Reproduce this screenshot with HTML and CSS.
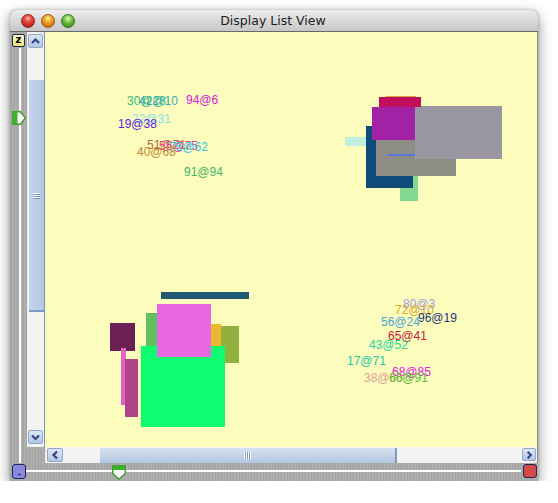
FILE: index.html
```html
<!DOCTYPE html>
<html>
<head>
<meta charset="utf-8">
<title>Display List View</title>
<link rel="stylesheet" href="styles.css">
</head>
<body>
<div class="window">
  <div class="titlebar">
    <div class="lights">
      <span class="light red"></span>
      <span class="light yellow"></span>
      <span class="light green"></span>
    </div>
    <div class="title">Display List View</div>
  </div>
  <div class="frame">
    <div class="leftpanel">
      <div class="zbtn">z</div>
      <div class="vtrack"></div>
      <svg class="marker-right" width="14" height="14" viewBox="0 0 14 14"><path d="M0.75 0.75H8.5L13.25 7L8.5 13.25H0.75Z" fill="#fff" stroke="#3c9e2c" stroke-width="1.5"/><rect x="0.5" y="0.5" width="5" height="13" fill="#3cb030"/></svg>
    </div>
    <div class="vscroll">
      <div class="abtn up"><svg width="13" height="12" viewBox="0 0 13 12"><path d="M3 8L6.5 4.5L10 8" fill="none" stroke="#34458a" stroke-width="2.2"/></svg></div>
      <div class="vthumb"><div class="vgrip"></div></div>
      <div class="spacer"></div>
      <div class="abtn down"><svg width="13" height="12" viewBox="0 0 13 12"><path d="M3 4.5L6.5 8L10 4.5" fill="none" stroke="#34458a" stroke-width="2.2"/></svg></div>
    </div>
    <div class="canvas">
      <div class="shape" style="left:300px;top:105px;width:21px;height:9px;background:#c2f0e0"></div>
      <div class="shape" style="left:355px;top:143px;width:18px;height:26px;background:#84d890"></div>
      <div class="shape" style="left:321px;top:94px;width:47px;height:62px;background:#0e4a7a"></div>
      <div class="shape" style="left:331px;top:108px;width:80px;height:36px;background:#8e8e86"></div>
      <div class="shape" style="left:327px;top:75px;width:43px;height:33px;background:#a222a6"></div>
      <div class="shape" style="left:370px;top:74px;width:87px;height:53px;background:#9a96a2"></div>
      <div class="shape" style="left:342px;top:122px;width:28px;height:2px;background:#5a78d8"></div>
      <div class="shape" style="left:334px;top:65px;width:42px;height:10px;background:#c0105c"></div>
      <div class="shape" style="left:341px;top:64px;width:30px;height:1px;background:#e0a040"></div>

      <div class="shape" style="left:116px;top:260px;width:88px;height:7px;background:#1f5a72"></div>
      <div class="shape" style="left:65px;top:291px;width:25px;height:28px;background:#6a2052"></div>
      <div class="shape" style="left:76px;top:316px;width:5px;height:57px;background:#e262c8"></div>
      <div class="shape" style="left:80px;top:327px;width:13px;height:58px;background:#b04488"></div>
      <div class="shape" style="left:101px;top:281px;width:11px;height:37px;background:#62c062"></div>
      <div class="shape" style="left:166px;top:292px;width:10px;height:22px;background:#e8b830"></div>
      <div class="shape" style="left:176px;top:294px;width:18px;height:37px;background:#90b040"></div>
      <div class="shape" style="left:96px;top:314px;width:84px;height:81px;background:#10fc70"></div>
      <div class="shape" style="left:112px;top:272px;width:54px;height:53px;background:#e868e2"></div>

      <span class="lbl" style="left:82px;top:63px;color:#30c080">30@28</span>
      <span class="lbl" style="left:94px;top:63px;color:#3aa8b8">42@10</span>
      <span class="lbl" style="left:141px;top:62px;color:#d020d4">94@6</span>
      <span class="lbl" style="left:87px;top:81px;color:#86e2e2">22@31</span>
      <span class="lbl" style="left:73px;top:86px;color:#6020e0">19@38</span>
      <span class="lbl" style="left:102px;top:107px;color:#b06838">51@71</span>
      <span class="lbl" style="left:114px;top:108px;color:#f040a0">55@75</span>
      <span class="lbl" style="left:124px;top:109px;color:#30c8e0">75@62</span>
      <span class="lbl" style="left:92px;top:114px;color:#c08838">40@68</span>
      <span class="lbl" style="left:139px;top:134px;color:#40b868">91@94</span>

      <span class="lbl" style="left:358px;top:266px;color:#a0a0e8">80@3</span>
      <span class="lbl" style="left:350px;top:272px;color:#e0a828">72@10</span>
      <span class="lbl" style="left:373px;top:280px;color:#203878">96@19</span>
      <span class="lbl" style="left:336px;top:284px;color:#48a8d8">56@24</span>
      <span class="lbl" style="left:343px;top:298px;color:#c82040">65@41</span>
      <span class="lbl" style="left:324px;top:307px;color:#20d8a0">43@52</span>
      <span class="lbl" style="left:302px;top:323px;color:#20c8a8">17@71</span>
      <span class="lbl" style="left:347px;top:334px;color:#e020e0">68@85</span>
      <span class="lbl" style="left:319px;top:340px;color:#e0a090">38@60</span>
      <span class="lbl" style="left:344px;top:340px;color:#50c030">66@91</span>
    </div>
    <div class="corner"></div>
    <div class="hscroll">
      <div class="abtn left"><svg width="13" height="12" viewBox="0 0 13 12"><path d="M8 2.5L4.5 6L8 9.5" fill="none" stroke="#34458a" stroke-width="2.2"/></svg></div>
      <div class="hthumb"><div class="hgrip"></div></div>
      <div class="spacer"></div>
      <div class="abtn right"><svg width="13" height="12" viewBox="0 0 13 12"><path d="M5 2.5L8.5 6L5 9.5" fill="none" stroke="#34458a" stroke-width="2.2"/></svg></div>
    </div>
    <div class="bottomstrip">
      <div class="sq blue"><span class="dot"></span></div>
      <div class="htrack">
        <div class="hline"></div>
        <svg class="marker-down" width="14" height="15" viewBox="0 0 14 15"><path d="M0.75 0.75H13.25V8.5L7 14.25L0.75 8.5Z" fill="#fff" stroke="#3c9e2c" stroke-width="1.5"/><rect x="0.5" y="0.5" width="13" height="4.5" fill="#3cb030"/></svg>
      </div>
      <div class="sq red"></div>
    </div>
  </div>
</div>
</body>
</html>
```
FILE: styles.css
```css
html, body {
  margin: 0;
  padding: 0;
  background: #ffffff;
}

.window {
  margin: 10px 0 0 10px;
  width: 528px;
  height: 471px;
  border-radius: 6px 6px 0 0;
  box-shadow: 0 5px 14px rgba(0, 0, 0, 0.45), 0 0 3px rgba(0, 0, 0, 0.25);
  display: flex;
  flex-direction: column;
  overflow: hidden;
  background: #a9a9a9;
}

.titlebar {
  height: 21px;
  border-bottom: 1px solid #6a6a6a;
  background: linear-gradient(#ededed, #d9d9d9 50%, #c6c6c6);
  border-radius: 6px 6px 0 0;
  display: flex;
  align-items: center;
  position: relative;
}

.lights {
  display: flex;
  gap: 6px;
  padding-left: 11px;
  padding-top: 1px;
}

.light {
  width: 14px;
  height: 14px;
  border-radius: 50%;
  box-sizing: border-box;
  display: block;
}

.light.red {
  background: radial-gradient(circle at 50% 30%, #ffb0a8 0, #e8483e 35%, #b41e18 80%);
  border: 1px solid #8a2a24;
}

.light.yellow {
  background: radial-gradient(circle at 50% 30%, #fff0a0 0, #f0a020 40%, #c06a10 85%);
  border: 1px solid #946020;
}

.light.green {
  background: radial-gradient(circle at 50% 30%, #d8ffb0 0, #70c040 40%, #3a8a20 85%);
  border: 1px solid #3e7428;
}

.title {
  position: absolute;
  left: 0;
  right: 0;
  top: 3px;
  text-align: center;
  font-family: "DejaVu Sans", sans-serif;
  font-size: 12.5px;
  color: #1c1c1c;
  padding-right: 2px;
}

.frame {
  flex: 1;
  display: grid;
  grid-template-columns: 17px 18px 1fr;
  grid-template-rows: 415px 16px 1fr;
  background: repeating-linear-gradient(90deg, #acacac 0 1px, #a3a3a3 1px 2px, #b0b0b0 2px 3px);
}

.leftpanel {
  grid-column: 1;
  grid-row: 1 / 3;
  position: relative;
  display: flex;
  flex-direction: column;
}

.zbtn {
  margin: 2px 0 0 2px;
  width: 13px;
  height: 13px;
  box-sizing: border-box;
  border: 1px solid #1a2a5a;
  border-radius: 2px;
  background: linear-gradient(#fff8c8, #f0e070);
  font-family: "DejaVu Sans", sans-serif;
  font-weight: bold;
  font-size: 10px;
  line-height: 10px;
  text-align: center;
  color: #000;
}

.vtrack {
  flex: 1;
  margin-left: 9px;
  width: 2px;
  background: #ffffff;
  margin-top: 1px;
}

.marker-right {
  position: absolute;
  left: 2px;
  top: 79px;
}

.vscroll {
  grid-column: 2;
  grid-row: 1;
  background: #f3f3f3;
  border-right: 1px solid #7890c0;
  display: flex;
  flex-direction: column;
}

.abtn {
  box-sizing: border-box;
  border: 1px solid #8ea6cc;
  border-radius: 2px;
  background: linear-gradient(#dde7f5, #b4c7e2);
  display: flex;
  align-items: center;
  justify-content: center;
}

.abtn.up {
  margin: 2px 0 0 1px;
  width: 15px;
  height: 14px;
}

.abtn.down {
  margin: 0 0 3px 1px;
  width: 15px;
  height: 14px;
}

.spacer {
  flex: 1;
}

.vthumb {
  margin: 32px 0 0 2px;
  width: 15px;
  height: 232px;
  box-sizing: border-box;
  background: linear-gradient(90deg, #c4d5ea, #b4c8e2);
  border-bottom: 2px solid #7c98c8;
  display: flex;
  justify-content: center;
}

.vgrip {
  margin-top: 113px;
  width: 7px;
  height: 6px;
  background: repeating-linear-gradient(#ffffff 0 1px, #7d96c4 1px 2px);
}

.canvas {
  grid-column: 3;
  grid-row: 1;
  position: relative;
  overflow: hidden;
  border-right: 1px solid #8a8a8a;
  background: repeating-conic-gradient(#ffffc6 0 25%, #f9f9b4 0 50%) 0 0 / 2px 2px;
}

.shape {
  position: absolute;
}

.lbl {
  position: absolute;
  font-family: "Liberation Sans", Arial, sans-serif;
  font-size: 12px;
  line-height: 12px;
  white-space: nowrap;
}

.corner {
  grid-column: 2;
  grid-row: 2;
}

.hscroll {
  grid-column: 3;
  grid-row: 2;
  background: #f3f3f3;
  border-right: 1px solid #8a8a8a;
  display: flex;
  align-items: flex-start;
  padding-top: 1px;
}

.abtn.left {
  margin-left: 2px;
  width: 16px;
  height: 14px;
}

.abtn.right {
  margin-right: 1px;
  width: 14px;
  height: 13px;
}

.hthumb {
  margin-left: 37px;
  width: 297px;
  height: 15px;
  box-sizing: border-box;
  background: linear-gradient(#d6e2f0, #b2c6df);
  border-right: 2px solid #7c98c8;
  display: flex;
  align-items: center;
  justify-content: center;
}

.hgrip {
  width: 7px;
  height: 7px;
  background: repeating-linear-gradient(90deg, #ffffff 0 1px, #7d96c4 1px 2px);
}

.bottomstrip {
  grid-column: 1 / 4;
  grid-row: 3;
  display: flex;
  align-items: flex-start;
  padding: 1px 1px 0 2px;
}

.sq {
  width: 14px;
  height: 15px;
  box-sizing: border-box;
  border: 1.5px solid #18285a;
  border-radius: 3px;
}

.sq.blue {
  background: #8a86e0;
  display: flex;
  justify-content: center;
  align-items: flex-end;
}

.dot {
  width: 3px;
  height: 1px;
  margin-bottom: 3px;
  background: #18285a;
}

.sq.red {
  height: 14px;
  background: #d44a48;
}

.htrack {
  flex: 1;
  position: relative;
  height: 16px;
}

.hline {
  margin-top: 6px;
  height: 2px;
  margin-right: 2px;
  background: #ffffff;
}

.marker-down {
  position: absolute;
  left: 86px;
  top: 1px;
}
```
